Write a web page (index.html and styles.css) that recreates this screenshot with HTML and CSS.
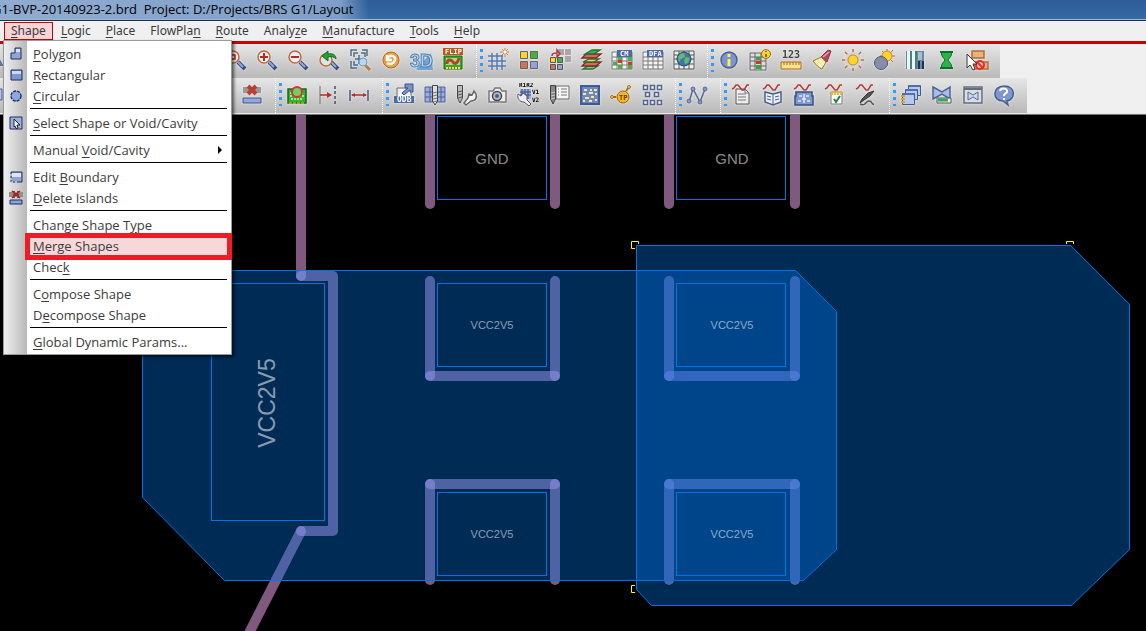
FILE: index.html
```html
<!DOCTYPE html>
<html lang="en">
<head>
  <meta charset="UTF-8" />
  <meta name="viewport" content="width=device-width, initial-scale=1" />
  <title>G1-BVP-20140923-2.brd</title>
  <link rel="stylesheet" href="styles.css">
</head>
<body>
  <header class="title-bar"><span class="title">G1-BVP-20140923-2.brd&nbsp; Project: D:/Projects/BRS G1/Layout</span></header>

  <nav class="menu-bar">
    <button class="open"><u>S</u>hape</button>
    <button><u>L</u>ogic</button>
    <button><u>P</u>lace</button>
    <button>FlowPla<u>n</u></button>
    <button><u>R</u>oute</button>
    <button>Analy<u>z</u>e</button>
    <button><u>M</u>anufacture</button>
    <button><u>T</u>ools</button>
    <button><u>H</u>elp</button>

    <ul class="dropdown">
      <li><button><svg viewBox="0 0 16 16"><path d="M3 13V7h4V2h6v11z" fill="#8fa5d8" stroke="#1e2f63"/><path d="M8 3h4v3H8z" fill="#dbe4f8"/></svg><span><u>P</u>olygon</span></button></li>
      <li><button><svg viewBox="0 0 16 16"><path d="M3 3h11v10H3z" fill="#7f97d0" stroke="#1e2f63"/><path d="M4 4h9v3H4z" fill="#cdd9f4"/></svg><span><u>R</u>ectangular</span></button></li>
      <li><button><svg viewBox="0 0 16 16"><circle cx="8" cy="8" r="5" fill="#8fa5e0" stroke="#1e2f63" stroke-width="1.4" stroke-dasharray="3 1"/></svg><span><u>C</u>ircular</span></button></li>
      <li class="sep"></li>
      <li><button><svg viewBox="0 0 16 16"><path d="M2 2h12v12H2z" fill="#9db0dc" stroke="#1e2f63"/><path d="M6 4l6 6H9l1 3-2 .5L7 11l-1 1z" fill="#fff" stroke="#14204a"/></svg><span><u>S</u>elect Shape or Void/Cavity</span></button></li>
      <li class="sep"></li>
      <li><button><span>Manual <u>V</u>oid/Cavity</span><svg class="arrow" viewBox="0 0 5 8"><path d="M0 0l4 4-4 4z"/></svg></button></li>
      <li class="sep"></li>
      <li><button><svg viewBox="0 0 16 16"><path d="M3 3h11v10H3z" fill="#8fa5d8" stroke="#1e2f63"/><path d="M4 4h9v4H4z" fill="#dbe4f8"/><path d="M3 5v8h8" fill="none" stroke="#fff" stroke-dasharray="2 2"/></svg><span>Edit <u>B</u>oundary</span></button></li>
      <li><button><svg viewBox="0 0 16 16"><path d="M1 2h14v5H1z" fill="#8f8f8f"/><path d="M4 1l8 7M12 1L4 8M6 1v7M10 1v7" stroke="#a52222" stroke-width="1.6"/><path d="M2 10h12v4H2z" fill="#7fa8e0" stroke="#1e2f63"/></svg><span><u>D</u>elete Islands</span></button></li>
      <li class="sep"></li>
      <li><button><span>Change Shape T<u>y</u>pe</span></button></li>
      <li class="marked"><button><span><u>M</u>erge Shapes</span></button></li>
      <li><button><span>Chec<u>k</u></span></button></li>
      <li class="sep"></li>
      <li><button><span>C<u>o</u>mpose Shape</span></button></li>
      <li><button><span>D<u>e</u>compose Shape</span></button></li>
      <li class="sep"></li>
      <li><button><span><u>G</u>lobal Dynamic Params...</span></button></li>
    </ul>
  </nav>

  <div class="toolbars">
    <div class="row">
      <div class="group zoom-group">
        <button class="edge" aria-label="Save"><svg viewBox="0 0 24 24"><path d="M18 8l5 9H14" fill="#dde4ee" stroke="#5c7896" stroke-width="2"/></svg></button>
        <button aria-label="Zoom window"><svg viewBox="0 0 24 24"><path d="M14 14l7 7" stroke="#37507f" stroke-width="4"/><path d="M14 14l5 5" stroke="#8eabd8" stroke-width="2"/><circle cx="9" cy="9" r="6" fill="#f1eef0" stroke="#b96a3c" stroke-width="1.5"/><path d="M7 7h4v4H7z" fill="none" stroke="#b72828" stroke-width="1.5"/></svg></button>
        <button aria-label="Zoom in"><svg viewBox="0 0 24 24"><path d="M14 14l7 7" stroke="#37507f" stroke-width="4"/><path d="M14 14l5 5" stroke="#8eabd8" stroke-width="2"/><circle cx="9" cy="9" r="6" fill="#f1eef0" stroke="#b96a3c" stroke-width="1.5"/><path d="M9 5v8M5 9h8" stroke="#b72828" stroke-width="2"/></svg></button>
        <button aria-label="Zoom out"><svg viewBox="0 0 24 24"><path d="M14 14l7 7" stroke="#37507f" stroke-width="4"/><path d="M14 14l5 5" stroke="#8eabd8" stroke-width="2"/><circle cx="9" cy="9" r="6" fill="#f1eef0" stroke="#b96a3c" stroke-width="1.5"/><path d="M5 9h8" stroke="#b72828" stroke-width="2"/></svg></button>
        <button aria-label="Zoom previous"><svg viewBox="0 0 24 24"><path d="M14 14l7 7" stroke="#37507f" stroke-width="4"/><path d="M14 14l5 5" stroke="#8eabd8" stroke-width="2"/><circle cx="9" cy="12" r="6" fill="#dfe4ea" stroke="#b96a3c" stroke-width="1.5"/><path d="M5 8l6-5v3c5-1 8 1 8 5-2-2-4-3-8-2v4z" fill="#27a03a" stroke="#126b22"/></svg></button>
        <button aria-label="Zoom fit"><svg viewBox="0 0 24 24"><path d="M3 8V2h6M14 2h5v6M3 13v7h6M6 9V5l4 0M13 5h4v4M6 13v4h4M11 7v9M7 11h9" fill="none" stroke="#4d6c8d" stroke-width="1.500"/><path d="M17 17l5 5" stroke="#c27a36" stroke-width="3"/><circle cx="15" cy="14" r="4" fill="#b4d9f2" stroke="#6c9cc4"/></svg></button>
        <button aria-label="Redraw"><svg viewBox="0 0 24 24"><circle cx="12" cy="12" r="8" fill="#f19b3b" stroke="#b96921"/><path d="M8 7v5h5M8 12c2-6 9-5 8 0-1 4-5 5-8 3" fill="none" stroke="#fff" stroke-width="2.500"/></svg></button>
        <button aria-label="3D view"><svg viewBox="0 0 24 24"><path d="M6 21l15-16 2 17H8z" fill="#72a3d2"/><text class="t3d" x="0" y="19">3D</text></svg></button>
        <button aria-label="Flip design"><svg viewBox="0 0 24 24"><path d="M3 8h18v13H3z" fill="#36aa2e" stroke="#176515"/><path d="M5 10h14v7H5z" fill="#a5dc85"/><path d="M6 16c0-5 4-5 6-2s5 1 6-4" fill="none" stroke="#b2422c" stroke-width="3"/><path d="M5 20h14" stroke="#ffd54a" stroke-width="2" stroke-dasharray="2 1"/><path d="M2 0h20v7H2z" fill="#b85a16"/><text class="tiny light" x="4" y="6">FLIP</text></svg></button>
      </div>
      <div class="group"><i class="handle"></i>
        <button aria-label="Grid toggle"><svg viewBox="0 0 24 24"><path d="M6 5v17M11 5v17M16 7v15M2 8h15M2 13h18M2 18h18" stroke="#5878b5" stroke-width="1.5"/><path d="M19 0v9M14 4h9M16 1l6 6M22 1l-6 6" stroke="#c68239"/><circle cx="19" cy="4" r="1.5" fill="#fff"/></svg></button>
        <button aria-label="Color"><svg viewBox="0 0 24 24"><g stroke="#656565"><path d="M3.500 3.500h7v7h-7z" fill="#ffd52b"/><path d="M13.500 3.500h7v7h-7z" fill="#42b43d"/><path d="M3.500 13.500h7v7h-7z" fill="#cd7657"/><path d="M13.500 13.500h7v7h-7z" fill="#8fa4d8"/></g></svg></button>
        <button aria-label="Color priority"><svg viewBox="0 0 24 24"><path d="M10 1h6v6h-6zM17 1h6v6h-6zM17 8h6v6h-6z" fill="#a8a8a8"/><g stroke="#555"><path d="M2.500 9.500h5v5h-5z" fill="#ffd52b"/><path d="M9.500 9.500h5v5h-5z" fill="#42b43d"/><path d="M2.500 16.500h5v5h-5z" fill="#cd7657"/><path d="M9.500 16.500h5v5h-5z" fill="#8fa4d8"/></g><path d="M4 8c0-3 2-3 5-3V2l3 4-3 3V6" fill="none" stroke="#b53434" stroke-width="1.500"/></svg></button>
        <button aria-label="Layers"><svg viewBox="0 0 24 24"><g stroke-width="1.300"><path d="M4 21l5-3h10l-5 3z" fill="#7ed078" stroke="#23712a"/><path d="M3 18l4-4h15l-5 4z" fill="#cc6c63" stroke="#862626"/><path d="M4 14l6-3h10l-5 3z" fill="#f0d568" stroke="#23712a"/><path d="M3 10l4-4h15l-5 4z" fill="#cc6c63" stroke="#862626"/><path d="M6 6l7-4h8l-6 4z" fill="#50a653" stroke="#23712a"/></g></svg></button>
        <button aria-label="Constraint manager"><svg viewBox="0 0 24 24"><path d="M2 4h20v17H2z" fill="#f3f3f3" stroke="#777"/><path d="M7 5v16M12 9v12M17 9v12M2 9h20M2 13h20M2 17h20" stroke="#777"/><path d="M8 9h4v4H8zM3 14h4v3H3zM18 9h4v4h-4zM8 17h4v4H8zM18 17h4v4h-4z" fill="#46b244"/><path d="M8 12h4v3H8zM18 14h4v3h-4z" fill="#e52f2f"/><path d="M7 2h15v7H7z" fill="#4d69a8"/><text class="tiny light" x="10" y="8">CM</text></svg></button>
        <button aria-label="DFA table"><svg viewBox="0 0 24 24"><path d="M2 4h20v17H2z" fill="#f3f3f3" stroke="#777"/><path d="M7 9v12M12 9v12M17 9v12M2 9h20M2 13h20M2 17h20" stroke="#777"/><path d="M6 2h16v7H6z" fill="#4d69a8"/><text class="tiny light" x="8" y="8">DFA</text></svg></button>
        <button aria-label="Web constraints"><svg viewBox="0 0 24 24"><path d="M2 3h20v18H2z" fill="#eee" stroke="#555"/><path d="M7 3v18M12 3v18M17 3v18M2 7h20M2 11h20M2 16h20" stroke="#555"/><circle cx="12" cy="11" r="7" fill="#3d78a8" stroke="#234867"/><path d="M8 6l4-1 1 4-4 2-2 3-1-5zM14 9l4 1-2 5-3 1-1-4z" fill="#64b86f"/></svg></button>
      </div>
      <div class="group"><i class="handle"></i>
        <button aria-label="Show element"><svg viewBox="0 0 24 24"><circle cx="12" cy="12" r="8" fill="#7b94cf" stroke="#4b6097" stroke-width="1.5"/><path d="M12 6v3M12 11v7" stroke="#fff04a" stroke-width="3"/></svg></button>
        <button aria-label="Cell info"><svg viewBox="0 0 24 24"><path d="M2 5h16v17H2z" fill="#ddd" stroke="#666"/><path d="M7 5v17M13 5v17M2 9h16M2 13h16M2 18h16" stroke="#666"/><path d="M8 9h5v3H8zM8 17h5v4H8z" fill="#35a645"/><path d="M8 13h5v3H8z" fill="#d43434"/><circle cx="18" cy="6" r="4.500" fill="#ffd42f" stroke="#9b6c13"/><path d="M18 3v1M18 6v3" stroke="#704710" stroke-width="1.5"/></svg></button>
        <button aria-label="Measure"><svg viewBox="0 0 24 24"><text class="digits" x="3" y="10">123</text><path d="M2 14h20v7H2z" fill="#ffe28d" stroke="#a96716"/><path d="M5 14v3M8 14v3M11 14v3M14 14v3M17 14v3M20 14v3" stroke="#a96716"/></svg></button>
        <button aria-label="Highlight"><svg viewBox="0 0 24 24"><path d="M11 9l7-7 3 1-4 11z" fill="#b8455c" stroke="#8a3548"/><path d="M13 9l6-5" stroke="#eaa0ac" stroke-width="1.500"/><path d="M3 13l8-4 5 5-4 7c-3-1-6-4-9-8z" fill="#f4ea9a" stroke="#8a7436"/><path d="M6 13l6 6M9 11l5 6" stroke="#fff"/></svg></button>
        <button aria-label="Shadow off"><svg viewBox="0 0 24 24"><path d="M12 1v22M1 12h22M4 4l16 16M20 4L4 20" stroke="#bc6d32" stroke-width="1.500"/><circle cx="12" cy="12" r="8" fill="#d2d2d2"/><circle cx="12" cy="12" r="5" fill="#ffd528" stroke="#c68632"/></svg></button>
        <button aria-label="Shadow on"><svg viewBox="0 0 24 24"><path d="M15 1v17M8 8h15M10 3l11 11M21 2L10 15" stroke="#bc6d32"/><circle cx="15" cy="8" r="5" fill="#ffd528" stroke="#c68632"/><circle cx="9" cy="15" r="6.500" fill="#8590a8" stroke="#4d5971"/></svg></button>
        <button aria-label="Colors by layer"><svg viewBox="0 0 24 24"><path d="M3 3h18v18H3z" fill="#6986a8"/><path d="M4 3h3v18H4zM9 3h3v18H9z" fill="#edf4f8"/><path d="M8 3v18M13 3v18" stroke="#24833b"/><path d="M15 4h4v8h-4z" fill="#a7bdd4"/><path d="M15 13h2v8h-2zM19 13h2v8h-2z" fill="#243450"/></svg></button>
        <button aria-label="Progress"><svg viewBox="0 0 24 24"><path d="M7 4h11l-1 4-3 4 3 4 1 4H7l1-4 3-4-3-4z" fill="#29b34b" stroke="#126a2e"/><path d="M6 4h13M6 20h13" stroke="#126a2e" stroke-width="2"/></svg></button>
        <button aria-label="Waive errors"><svg viewBox="0 0 24 24"><path d="M7 3h12v7H7zM9 14h14v7H9z" fill="#e7b27e" stroke="#b06c37" stroke-width="1.5"/><circle cx="15" cy="17" r="4" fill="#fbb" stroke="#e22e27" stroke-width="2"/><path d="M12 14l6 6" stroke="#e22e27" stroke-width="2"/><path d="M2 6v14l3-3 3 5 2-1-2-5h4z" fill="#fff" stroke="#333"/></svg></button>
      </div>
    </div>

    <div class="row">
      <div class="group shape-group">
        <button class="edge" aria-label="Shape add"><svg viewBox="0 0 24 24"><path d="M5 6h18v11H5z" fill="#b4c5ec" stroke="#405b9c"/></svg></button>
        <button aria-label="Delete islands"><svg viewBox="0 0 24 24"><path d="M3 4h18v6H3z" fill="#999"/><path d="M8 3l8 8M16 3l-8 8" stroke="#bb3e35" stroke-width="4"/><path d="M3 15h18v5H3z" fill="#93a7da" stroke="#40588c"/></svg></button>
      </div>
      <div class="group"><i class="handle"></i>
        <button aria-label="Board check"><svg viewBox="0 0 24 24"><path d="M3 6h18v14H3z" fill="#37ae35" stroke="#156a1c" stroke-width="1.5"/><path d="M5 10h3M16 10h3M5 13h14M6 16h12" stroke="#9eea7d" stroke-width="2" stroke-dasharray="2 1"/><path d="M4 20h16" stroke="#ffcb3a" stroke-dasharray="3 1"/><circle cx="12" cy="9" r="5" fill="#75cc60" stroke="#c83b35" stroke-width="2"/></svg></button>
        <button aria-label="Align"><svg viewBox="0 0 24 24"><path d="M4 3v18" stroke="#666"/><path d="M19 3v18" stroke="#385276" stroke-dasharray="3 2" stroke-width="1.5"/><path d="M4 12h8" stroke="#a33131" stroke-width="1.5"/><path d="M11 9l5 3-5 3z" fill="#b72e2e"/></svg></button>
        <button aria-label="Dimension"><svg viewBox="0 0 24 24"><path d="M3 7v11M21 7v11" stroke="#3e5b83" stroke-width="1.5"/><path d="M5 12h14" stroke="#a33131" stroke-width="1.500"/><path d="M4 12l4-2v4zM20 12l-4-2v4z" fill="#b72e2e"/></svg></button>
      </div>
      <div class="group"><i class="handle"></i>
        <button aria-label="ODB export"><svg viewBox="0 0 24 24"><path d="M5 5h14v14H5z" fill="#eee" stroke="#666"/><path d="M10 10l6-5h-3V1h8v8h-3V7l-6 5z" fill="#7b91ca" stroke="#344f8b"/><path d="M2 13h20v7H2z" fill="#4d69a8"/><text class="odb" x="5" y="19">ODB</text></svg></button>
        <button aria-label="Drill table"><svg viewBox="0 0 24 24"><path d="M2 4h20v15H2z" fill="#9bade0" stroke="#4b6293"/><path d="M7 4v15M18 4v15M2 9h20M2 14h20" stroke="#4b6293"/><path d="M9.500 2.500h5V18L12 22l-2.500-4z" fill="#ddd" stroke="#414141"/><path d="M10 10l4-1M10 13l4-1M10 16l4-1M10 19l4-1" stroke="#777"/></svg></button>
        <button aria-label="Drill setup"><svg viewBox="0 0 24 24"><path d="M3.500 2.500h5V15L6 20l-2.500-5z" fill="#bbb" stroke="#444"/><path d="M4 9l4-1M4 12l4-1M4 15l4-1" stroke="#555"/><path d="M20 8l-2 4-3-1-1 4-4 5 2 2 5-4c5 0 6-4 5-7z" fill="#f2f2f2" stroke="#656565" stroke-width="1.500"/></svg></button>
        <button aria-label="Artwork"><svg viewBox="0 0 24 24"><path d="M4 8h4l2-3h5l2 3h4v11H4z" fill="#ececec" stroke="#777" stroke-width="1.500"/><circle cx="12" cy="13" r="4.500" fill="#b7bdca" stroke="#454545" stroke-width="1.500"/><circle cx="12" cy="13" r="2" fill="#445f92"/></svg></button>
        <button aria-label="Rename refdes"><svg viewBox="0 0 24 24"><path d="M4 6h11v10H4z" fill="#9eb1df"/><path d="M6 6v10M9 6v10M12 6v10M4 9h11M4 12h11" stroke="#344f8a"/><path d="M2 11l3 2 2-3 4 3v4l4 4-2 2-5-4c-5 0-7-4-6-8z" fill="#eee" stroke="#555"/><text class="refs" x="3" y="4">R1R2</text><text class="refs" x="16" y="11">V1</text><text class="refs" x="16" y="19">V2</text></svg></button>
        <button aria-label="Drill legend"><svg viewBox="0 0 24 24"><path d="M9 3h13v13H9z" fill="#f5f5f5" stroke="#666"/><path d="M11 6h1M11 9h1M11 12h1M14 6h6M14 9h6M14 12h6" stroke="#777"/><path d="M3.500 2.500h5V16L6 21l-2.500-5z" fill="#888" stroke="#3d3d3d"/><path d="M4 10l4-1M4 13l4-1M4 16l4-1" stroke="#ccc"/></svg></button>
        <button aria-label="Stream grid"><svg viewBox="0 0 24 24"><path d="M3 3h18v18H3z" fill="#7188bd" stroke="#3b5b99" stroke-width="2"/><path d="M6 7h3M12 7h2M16 7h3M5 11h3M11 10h4M17 11h2M7 15h4M13 14h3M5 18h2M11 18h3M17 17h2" stroke="#f8e4a2" stroke-width="2"/></svg></button>
        <button aria-label="Test point"><svg viewBox="0 0 24 24"><path d="M2 14h5M17 8l3-4" stroke="#9c6915" stroke-width="2"/><circle cx="3" cy="14" r="1.500" fill="#ffd85c" stroke="#9c6915"/><circle cx="20" cy="4" r="1.500" fill="#ffd85c" stroke="#9c6915"/><circle cx="14" cy="14" r="6" fill="#f6b626" stroke="#925e13"/><text class="tp" x="10" y="17">TP</text></svg></button>
        <button aria-label="Array"><svg viewBox="0 0 24 24"><path d="M3.500 2.500h4v4h-4zM10.500 2.500h4v4h-4zM17.500 2.500h4v4h-4zM5.500 9.500h4v4h-4zM14.500 9.500h4v4h-4zM3.500 17.500h4v4h-4zM10.500 17.500h4v4h-4zM17.500 17.500h4v4h-4z" fill="#f4f5f9" stroke="#52668b" stroke-width="1.500"/></svg></button>
      </div>
      <div class="group"><i class="handle"></i>
        <button aria-label="Signal probe"><svg viewBox="0 0 24 24"><path d="M4 19L8 6l7 13 5-13" fill="none" stroke="#526995" stroke-width="1.5"/><g fill="#879bca" stroke="#526995"><circle cx="4" cy="18" r="2"/><circle cx="8" cy="6" r="2"/><circle cx="15" cy="19" r="2"/><circle cx="20" cy="6" r="2"/></g></svg></button>
      </div>
      <div class="group"><i class="handle"></i>
        <button aria-label="Signal report"><svg viewBox="0 0 24 24"><path d="M6 6h9l4 4v11H6z" fill="#eee" stroke="#555"/><path d="M15 6v4h4M8 11h8M8 14h8M8 17h8" fill="none" stroke="#777"/><path d="M2 6l2-1 2-3h2l4 5h2l3-5h2" fill="none" stroke="#b33b38" stroke-width="1.500"/></svg></button>
        <button aria-label="Signal library"><svg viewBox="0 0 24 24"><path d="M4 9l8 2 8-2v10l-8 3-8-3z" fill="#eef2fb" stroke="#485f8d" stroke-width="1.5"/><path d="M12 11v11M6 13l4 1M6 16l4 1M14 14l4-1M14 17l4-1" stroke="#485f8d"/><path d="M2 6l2-1 2-3h2l4 5h2l3-5h2" fill="none" stroke="#b33b38" stroke-width="1.500"/></svg></button>
        <button aria-label="Signal model"><svg viewBox="0 0 24 24"><path d="M4 9h16v4h1v9H3v-9h1z" fill="#7f99cd" stroke="#354f82" stroke-width="1.500"/><path d="M7 13h3M14 13h3M6 18h3M15 18h3M12 11v9M10 16h4" stroke="#e2e8f8" stroke-width="1.5"/><path d="M2 6l2-1 2-3h2l4 5h2l3-5h2" fill="none" stroke="#b33b38" stroke-width="1.500"/></svg></button>
        <button aria-label="Signal audit"><svg viewBox="0 0 24 24"><path d="M8 9h11v12H8z" fill="#fff" stroke="#777"/><path d="M8 10h11" stroke="#e8b43c" stroke-width="4" stroke-dasharray="2 1"/><path d="M11 16l2 3 4-6" fill="none" stroke="#23813b" stroke-width="2"/><path d="M2 6l2-1 2-3h2l4 5h2l3-5h2" fill="none" stroke="#b33b38" stroke-width="1.500"/></svg></button>
        <button aria-label="Signal probe cable"><svg viewBox="0 0 24 24"><path d="M20 8l-4 5-6 4-4 3 2-4 6-6z" fill="#555" stroke="#333"/><path d="M6 21c6 3 5-3 9-3s2 4 5 3" fill="none" stroke="#555" stroke-width="1.500"/><path d="M2 6l2-1 2-3h2l4 5h2l3-5h2" fill="none" stroke="#b33b38" stroke-width="1.500"/></svg></button>
      </div>
      <div class="group"><i class="handle"></i>
        <button aria-label="Cascade"><svg viewBox="0 0 24 24"><g fill="#b7c9ed" stroke="#405a8d"><path d="M9.500 2.500h12v10h-12z"/><path d="M6.500 6.500h12v10h-12z"/><path d="M3.500 10.500h12v11h-12z"/></g><path d="M10 3h11M7 7h11M4 11h11" stroke="#4f6fb0" stroke-width="2"/><path d="M2 13h4M2 16h4M2 19h4" stroke="#dfa12e" stroke-width="2"/></svg></button>
        <button aria-label="Route run"><svg viewBox="0 0 24 24"><path d="M3 4l9 5 8-5v12l-8-5-9 5z" fill="#a9bce8" stroke="#4a6393" stroke-width="1.5"/><path d="M7 15h14v5H7z" fill="#eee" stroke="#555"/><path d="M8 17h10" stroke="#36a956" stroke-width="3"/></svg></button>
        <button aria-label="Route window"><svg viewBox="0 0 24 24"><path d="M3 4h18v16H3z" fill="#ddd" stroke="#626e7e" stroke-width="1.500"/><path d="M3 6h18" stroke="#626e7e" stroke-width="2"/><path d="M7 9l5 3 5-3v8l-5-3-5 3z" fill="#c9d7f4" stroke="#526a98"/></svg></button>
        <button aria-label="Help"><svg viewBox="0 0 24 24"><path d="M12 3c13 0 11 14 3 15l1 4-5-4C0 18 0 3 12 3z" fill="#7e97ce" stroke="#465d91" stroke-width="1.500"/><path d="M8 8c1-4 8-3 7 1-1 2-3 1-3 4M12 15v2" fill="none" stroke="#fff" stroke-width="2"/></svg></button>
      </div>
    </div>
  </div>

  <main class="board">
    <svg viewBox="0 115 1146 516" preserveAspectRatio="xMinYMin slice">
      <!-- etch -->
      <g class="trace">
        <path d="M301 100V276"/>
        <path d="M301 276H333V531H301"/>
        <path d="M301 531L245 641"/>
        <path d="M430 100V204"/><path d="M555 100V204"/>
        <path d="M669 100V204"/><path d="M795 100V204"/>
        <path d="M430 281V376"/><path d="M430 376H555"/><path d="M555 281V376"/>
        <path d="M669 281V376"/><path d="M669 376H795"/><path d="M795 281V376"/>
        <path d="M430 580V484"/><path d="M430 484H555"/><path d="M555 580V484"/>
        <path d="M669 580V484"/><path d="M669 484H795"/><path d="M795 580V484"/>
      </g>

      <!-- shapes to merge -->
      <g class="shape">
        <path d="M142.500 270.500H795.500L836.500 311.500V549.500L803.500 580.500H224.500L142.500 497.500z"/>
        <path d="M636.500 245.500H1070.500L1129.500 304.500V549.500L1071.500 605.500H651.500L636.500 589.500z"/>
      </g>

      <!-- pads -->
      <g class="pad">
        <rect x="211.500" y="283.500" width="113" height="237"/>
        <rect x="437.500" y="116.500" width="109" height="83"/>
        <rect x="676.500" y="116.500" width="109" height="83"/>
        <rect x="437.500" y="283.500" width="109" height="83"/>
        <rect x="676.500" y="283.500" width="109" height="83"/>
        <rect x="437.500" y="492.500" width="109" height="83"/>
        <rect x="676.500" y="492.500" width="109" height="83"/>
      </g>

      <g class="net">
        <text class="gnd" x="492" y="164">GND</text>
        <text class="gnd" x="732" y="164">GND</text>
        <text x="492" y="329">VCC2V5</text>
        <text x="732" y="329">VCC2V5</text>
        <text x="492" y="538">VCC2V5</text>
        <text x="732" y="538">VCC2V5</text>
        <text class="big" transform="translate(275 403) rotate(-90)">VCC2V5</text>
      </g>

      <path class="grip" d="M635 248.500H631.500V241.500H638.500V244M1066.500 244V241.500H1073.500V244M635 585.500H631.500V592.500H635"/>
    </svg>
  </main>
</body>
</html>
```
FILE: styles.css
```css
* {
  box-sizing: border-box;
}

body {
  margin: 0;
  height: 100vh;
  display: flex;
  flex-direction: column;
  overflow: hidden;
  background: #000;
  font-family: "Noto Sans", sans-serif;
  font-size: 12px;
  color: #3c3c3c;
}

button {
  margin: 0;
  padding: 0;
  border: 0;
  background: none;
  font: inherit;
  color: inherit;
}

u {
  text-underline-offset: 2px;
}

.title-bar {
  height: 21px;
  flex: none;
  overflow: hidden;
  background: linear-gradient(#2c5d97, #376ba5);
  border-bottom: 1px solid #1c2f47;
  box-shadow: inset 0 -1px #9db9d8;
  color: #000;
  font-family: "Open Sans", sans-serif;
  font-size: 13px;
  line-height: 19px;
  white-space: nowrap;
}

.title {
  display: inline-block;
  margin-left: -8px;
  padding-right: 16px;
  background: linear-gradient(90deg, #90acd0, #7f9fc8 92%, transparent);
}

.menu-bar {
  position: relative;
  z-index: 2;
  height: 23px;
  flex: none;
  display: flex;
  gap: 1px;
  align-items: flex-start;
  padding-left: 4px;
  background: #f0f0f0;
  border-bottom: 3px solid #c80000;
}

.menu-bar > button {
  height: 18px;
  margin-top: 1px;
  padding: 0 6px;
  border: 1px solid transparent;
  line-height: 16px;
}

.menu-bar > .open {
  background: #f5d5d7;
  border-color: #c80000;
}

.dropdown {
  position: absolute;
  left: 3px;
  top: 19px;
  width: 229px;
  margin: 0;
  padding: 2px 4px 2px 0;
  list-style: none;
  border: 1px solid #999;
  background: linear-gradient(90deg, #efefef, #b8b8b8 23px, #fff 23px);
  box-shadow: 2px 2px 3px #0009;
  font-family: "Open Sans", sans-serif;
  font-size: 13px;
}

.dropdown li {
  position: relative;
}

.dropdown button {
  display: flex;
  align-items: center;
  width: 100%;
  height: 21px;
  padding-left: 4px;
  text-align: left;
}

.dropdown button svg {
  width: 16px;
  height: 16px;
}

.dropdown span {
  margin-left: 9px;
}

.dropdown span:first-child {
  margin-left: 25px;
}

.dropdown button .arrow {
  width: 5px;
  height: 8px;
  margin-left: auto;
  margin-right: 4px;
}

.dropdown .sep {
  height: 1px;
  margin: 2px 0 3px 26px;
  background: #000;
}

.marked::before {
  content: "";
  position: absolute;
  inset: -2px -5px -4px 21px;
  border: 5px solid #ee1c25;
  background: #f6d8da;
}

.marked button {
  position: relative;
}

.toolbars {
  flex: none;
  background: #f0f0f0;
  border-bottom: 1px solid #777;
}

.row {
  display: flex;
  height: 34px;
}

.row + .row {
  height: 36px;
  border-bottom: 1px solid #e8e8e8;
}

.group {
  display: flex;
  align-items: center;
  gap: 7px;
  padding: 0 11px 2px 3px;
  background: linear-gradient(#e6e6e6, #b9b9b9);
  border-left: 1px dotted #fff;
}

.group button {
  width: 24px;
  height: 24px;
}

.group svg {
  display: block;
  width: 24px;
  height: 24px;
  filter: drop-shadow(0 0 1px #eee);
}

.handle {
  width: 3px;
  height: 23px;
  margin-right: -4px;
  background: repeating-linear-gradient(#3399ff 0 3px, transparent 3px 7px);
}

.zoom-group,
.shape-group {
  width: 476px;
  justify-content: flex-end;
  border-left: 0;
}

.shape-group {
  width: 275px;
}

.group .edge {
  margin-left: -24px;
  margin-right: auto;
}

.board {
  flex: 1;
  min-height: 0;
}

.board svg {
  display: block;
  width: 100%;
  height: 100%;
}

.trace path {
  fill: none;
  stroke: #ffb2fe;
  stroke-opacity: 0.5;
  stroke-width: 10;
  stroke-linecap: round;
  stroke-linejoin: round;
}

.shape path {
  fill: #0070df;
  fill-opacity: 0.38;
  stroke: #0073e6;
}

.pad rect {
  fill: none;
  stroke: #0073e6;
}

.net text {
  font-family: "Liberation Sans", sans-serif;
  font-size: 11px;
  text-anchor: middle;
  fill: #fff;
  fill-opacity: 0.55;
}

.net .gnd {
  font-size: 15px;
}

.net .big {
  font-size: 23px;
}

.grip {
  fill: none;
  stroke: #ff0;
}

/* lettering inside toolbar icons */
.tiny,
.odb,
.refs,
.tp,
.digits {
  font-family: "DejaVu Sans Mono", monospace;
  font-weight: bold;
  font-size: 7px;
}

.light,
.odb {
  fill: #fff;
}

.odb {
  font-size: 8px;
}

.refs {
  font-size: 6px;
}

.tp {
  font-size: 7px;
  fill: #5e3a05;
}

.digits {
  font-size: 10px;
  fill: #444;
}

.t3d {
  font-family: "Liberation Sans", sans-serif;
  font-weight: bold;
  font-size: 18px;
  fill: #b9d4ec;
  stroke: #4b7eaf;
}
```
